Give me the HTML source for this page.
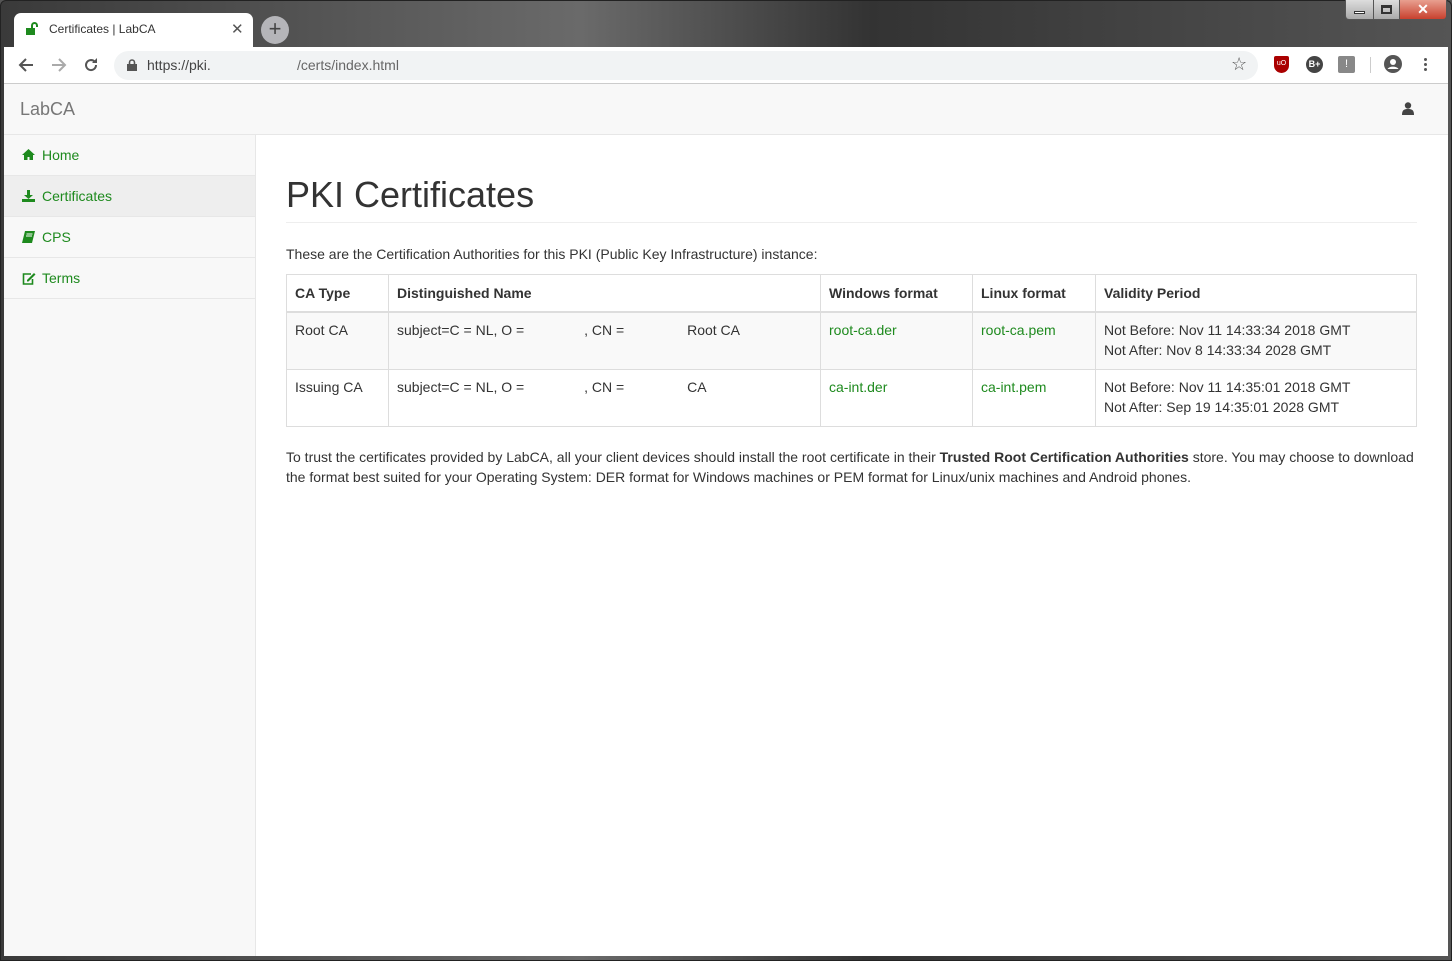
<!DOCTYPE html>
<html><head><style>
*{box-sizing:border-box;margin:0;padding:0}
body{width:1452px;height:961px;overflow:hidden;font-family:"Liberation Sans",Arial,sans-serif;font-size:14px;color:#333;background:#555;position:relative}
.frame{position:absolute;left:0;top:0;width:1452px;height:961px;background:linear-gradient(90deg,#3a3a3a,#6a6a6a 40%,#333 60%,#555);border:1px solid #222;border-radius:6px 6px 0 0}
.tab{position:absolute;left:14px;top:13px;width:239px;height:34px;background:#fff;border-radius:7px 7px 0 0;font-size:12px;color:#333}
.newtab{position:absolute;left:261px;top:16px;width:28px;height:28px;border-radius:50%;background:#b5b5b9;color:#444;font-size:22px;line-height:26px;text-align:center}
.winbtn{position:absolute;top:0;height:20px;border:1px solid #555;border-top:none}
.toolbar{position:absolute;left:4px;top:47px;width:1444px;height:37px;background:#fff;border-bottom:1px solid #ccc}
.omni{position:absolute;left:110px;top:4px;width:1144px;height:29px;background:#f1f3f4;border-radius:15px;font-size:14px;color:#444}
.page{position:absolute;left:4px;top:84px;width:1444px;height:872px;background:#fff}
.nav{position:absolute;left:0;top:0;width:1444px;height:51px;background:#f8f8f8;border-bottom:1px solid #e7e7e7}
.side{position:absolute;left:0;top:51px;width:252px;height:821px;background:#f8f8f8;border-right:1px solid #e7e7e7}
.side div{height:41px;border-bottom:1px solid #e7e7e7;color:#1e8a1e;padding:12px 0 0 38px;position:relative}
.side div.act{background:#eee}
.side svg{position:absolute;left:18px;top:14px}
.main{position:absolute;left:282px;top:51px;width:1131px}
h1{font-size:36px;font-weight:normal;margin-top:40px;line-height:40px;height:48px;border-bottom:1px solid #eee}
table{border-collapse:collapse;width:1131px;margin-top:12px}
td,th{border:1px solid #ddd;text-align:left;vertical-align:top;padding:8px;line-height:20px}
th{height:37px;border-bottom:2px solid #ddd;padding-top:8px}
td{height:57px;padding-top:7px}
a{color:#1e8a1e;text-decoration:none}
</style></head><body>
<div class="frame"></div>
<div class="winbtn" style="left:1345px;width:29px;background:linear-gradient(#ddd,#aaa);border-radius:0 0 0 4px"><div style="margin:11px auto 0;width:11px;height:3px;background:#fff;border:1px solid #333"></div></div>
<div class="winbtn" style="left:1373px;width:27px;background:linear-gradient(#ddd,#aaa)"><div style="margin:5px auto 0;width:11px;height:9px;border:2px solid #333;border-top-width:3px"></div></div>
<div class="winbtn" style="left:1399px;width:48px;background:linear-gradient(#e8a090,#c8412e);border-radius:0 0 4px 0;color:#fff;text-align:center;font-weight:bold;font-size:14px;line-height:18px">✕</div>
<div class="tab">
<svg style="position:absolute;left:11px;top:9px" width="16" height="14" viewBox="0 0 16 14"><rect x="1" y="6" width="9" height="7" fill="#1e8a1e"/><path d="M7 6V3.5a2.5 2.5 0 0 1 5 0V5" stroke="#1e8a1e" stroke-width="2" fill="none"/></svg>
<span style="position:absolute;left:35px;top:9px">Certificates | LabCA</span>
<span style="position:absolute;left:217px;top:7px;font-size:15px;color:#555">✕</span></div>
<div class="newtab">+</div>
<div class="toolbar">
<svg style="position:absolute;left:14px;top:10px" width="16" height="16" viewBox="0 0 16 16"><path d="M15 8H3M8 2L2 8l6 6" stroke="#555" stroke-width="2" fill="none"/></svg>
<svg style="position:absolute;left:47px;top:10px" width="16" height="16" viewBox="0 0 16 16"><path d="M1 8h12M8 2l6 6-6 6" stroke="#aaa" stroke-width="2" fill="none"/></svg>
<svg style="position:absolute;left:79px;top:10px" width="16" height="16" viewBox="0 0 16 16"><path d="M13 8a5 5 0 1 1-1.5-3.5" stroke="#555" stroke-width="2" fill="none"/><path d="M14 1v5H9z" fill="#555"/></svg>
<div class="omni">
<svg style="position:absolute;left:13px;top:8px" width="10" height="12" viewBox="0 0 10 12"><rect x="0" y="5" width="10" height="7" fill="#555"/><path d="M2.5 5V3.5a2.5 2.5 0 0 1 5 0V5" stroke="#555" stroke-width="1.6" fill="none"/></svg>
<span style="position:absolute;left:33px;top:6px">https://pki.</span>
<span style="position:absolute;left:183px;top:6px;color:#666">/certs/index.html</span>
<span style="position:absolute;left:1117px;top:3px;font-size:18px;color:#555">☆</span></div>
<div style="position:absolute;left:1270px;top:9px;width:15px;height:17px;background:#a00;border-radius:2px 2px 8px 8px;color:#fff;font-size:7px;text-align:center;line-height:15px">uO</div>
<div style="position:absolute;left:1302px;top:9px;width:17px;height:17px;background:#444;border-radius:50%;color:#fff;font-size:9px;font-weight:bold;text-align:center;line-height:17px">B+</div>
<div style="position:absolute;left:1334px;top:9px;width:17px;height:17px;background:#888;border-radius:2px;color:#fff;font-size:11px;text-align:center;line-height:17px">!</div>
<div style="position:absolute;left:1366px;top:10px;width:1px;height:16px;background:#ccc"></div>
<svg style="position:absolute;left:1380px;top:8px" width="18" height="18" viewBox="0 0 18 18"><circle cx="9" cy="9" r="9" fill="#555"/><circle cx="9" cy="7" r="3" fill="#fff"/><path d="M3.5 14a6 4 0 0 1 11 0" fill="#fff"/></svg>
<div style="position:absolute;left:1420px;top:11px;width:3px;line-height:5px;font-size:0">
<div style="width:3px;height:3px;background:#555;border-radius:50%;margin-bottom:2px"></div><div style="width:3px;height:3px;background:#555;border-radius:50%;margin-bottom:2px"></div><div style="width:3px;height:3px;background:#555;border-radius:50%"></div></div>
</div>
<div class="page">
<div class="nav"><span style="position:absolute;left:16px;top:15px;font-size:18px;color:#777">LabCA</span>
<svg style="position:absolute;left:1398px;top:18px" width="12" height="13" viewBox="0 0 12 13"><circle cx="6" cy="3.5" r="3.2" fill="#444"/><path d="M0 13c0-5 2-6 6-6s6 1 6 6z" fill="#444"/></svg></div>
<div class="side">
<div><svg width="13" height="11" viewBox="0 0 13 11"><path d="M6.5 0L0 6h2v5h3.5V8h2v3H11V6h2z" fill="#1e8a1e"/></svg>Home</div>
<div class="act"><svg width="13" height="12" viewBox="0 0 13 12"><path d="M5 0h3v5h3L6.5 9 2 5h3z" fill="#1e8a1e"/><rect x="0" y="9" width="13" height="3" fill="#1e8a1e"/></svg>Certificates</div>
<div><svg width="13" height="12" viewBox="0 0 13 12"><path d="M3 0h10l-3 12H0z" fill="#1e8a1e"/><path d="M4.5 3h6M4 5h6" stroke="#fff" stroke-width="1"/></svg>CPS</div>
<div><svg width="14" height="13" viewBox="0 0 14 13"><path d="M9 2H1.5v10h9V7" stroke="#1e8a1e" stroke-width="1.6" fill="none"/><path d="M5 8l7-7 1.5 1.5-7 7H5z" fill="#1e8a1e"/></svg>Terms</div>
</div>
<div class="main">
<h1>PKI Certificates</h1>
<p style="margin-top:21px;line-height:20px">These are the Certification Authorities for this PKI (Public Key Infrastructure) instance:</p>
<table style="margin-top:10px">
<tr><th style="width:102px">CA Type</th><th style="width:432px">Distinguished Name</th><th style="width:152px">Windows format</th><th style="width:123px">Linux format</th><th>Validity Period</th></tr>
<tr style="background:#f9f9f9"><td>Root CA</td><td>subject=C = NL, O = <span style="display:inline-block;width:56px"></span>, CN = <span style="display:inline-block;width:59px"></span>Root CA</td><td><a>root-ca.der</a></td><td><a>root-ca.pem</a></td><td>Not Before: Nov 11 14:33:34 2018 GMT<br>Not After: Nov 8 14:33:34 2028 GMT</td></tr>
<tr><td>Issuing CA</td><td>subject=C = NL, O = <span style="display:inline-block;width:56px"></span>, CN = <span style="display:inline-block;width:59px"></span>CA</td><td><a>ca-int.der</a></td><td><a>ca-int.pem</a></td><td>Not Before: Nov 11 14:35:01 2018 GMT<br>Not After: Sep 19 14:35:01 2028 GMT</td></tr>
</table>
<p style="margin-top:20px;line-height:20px">To trust the certificates provided by LabCA, all your client devices should install the root certificate in their <b>Trusted Root Certification Authorities</b> store. You may choose to download the format best suited for your Operating System: DER format for Windows machines or PEM format for Linux/unix machines and Android phones.</p>
</div>
</div>
</body></html>
